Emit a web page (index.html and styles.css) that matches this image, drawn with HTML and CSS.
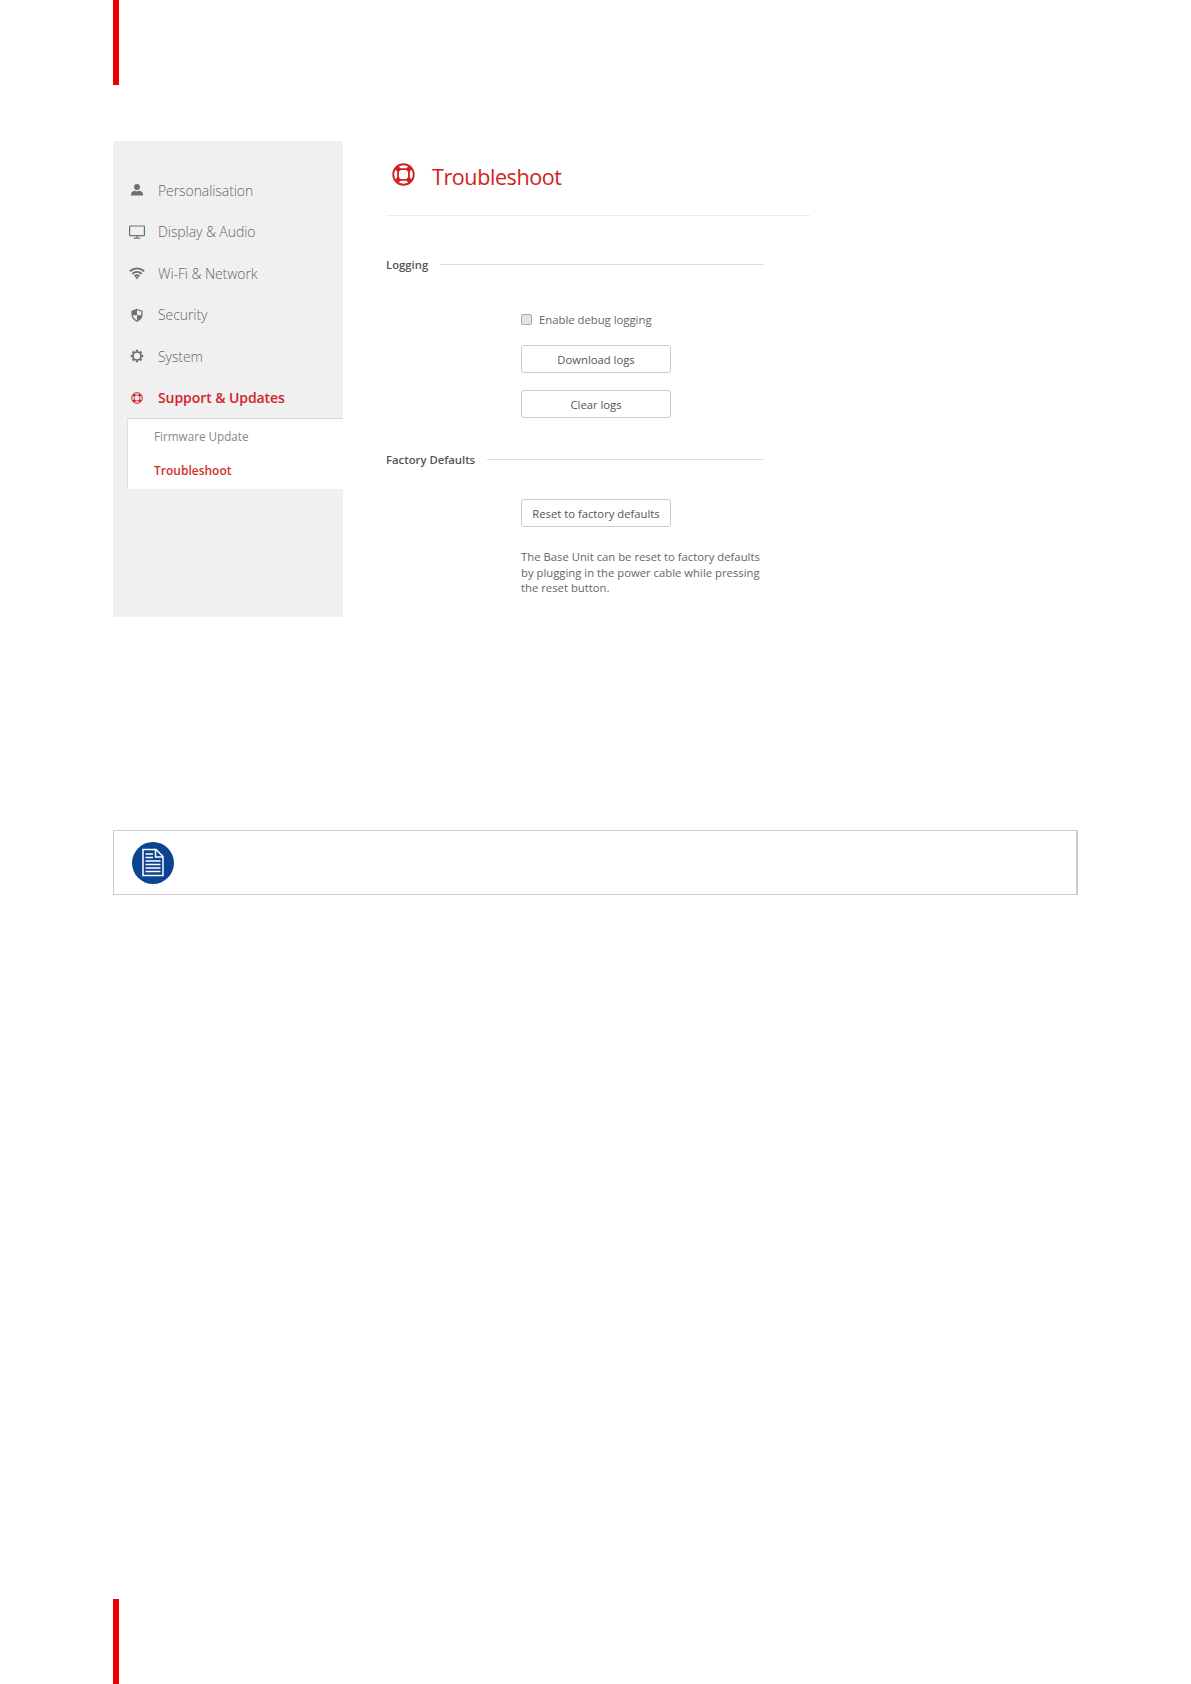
FILE: index.html
```
<!DOCTYPE html>
<html lang="en">
<head>
  <meta charset="UTF-8" />
  <meta name="viewport" content="width=device-width, initial-scale=1" />
  <title>Troubleshoot</title>
  <link rel="stylesheet" href="styles.css">
</head>
<body>

  <svg class="defs" width="0" height="0">
    <symbol id="lifebuoy" viewBox="0 0 24 24">
      <circle cx="12" cy="12" r="10.700" fill="none" stroke="currentColor" stroke-width="1.900" />
      <rect x="6.300" y="6.300" width="11.400" height="11.400" rx="4" fill="none" stroke="currentColor" stroke-width="1.900" />
      <path d="M4.600 4.600l3.300 3.300M19.400 4.600l-3.300 3.300M4.600 19.400l3.300-3.300M19.400 19.400l-3.300-3.300" stroke="currentColor" stroke-width="5" />
    </symbol>
  </svg>

  <div class="page">
    <div class="red-bar"></div>

    <div class="screen">
      <nav class="sidebar">
        <a class="item">
          <svg class="icon" viewBox="0 0 16 16"><circle cx="8" cy="4.900" r="3" /><path d="M2 13.600v-1.400c0-2.200 2-3.200 4-3.400 1.300.7 2.700.7 4 0 2 .2 4 1.200 4 3.400v1.400z" /></svg>
          <span>Personalisation</span>
        </a>
        <a class="item">
          <svg class="icon" viewBox="0 0 16 16"><path d="M1.200 2h13.600q.6 0 .6.600v8.400q0 .6-.6.600H1.200q-.6 0-.6-.6V2.600q0-.6.600-.6zM8 11.600v2.200M4.800 14.100h6.400" fill="none" stroke="currentColor" stroke-width="1.200" /></svg>
          <span>Display &amp; Audio</span>
        </a>
        <a class="item">
          <svg class="icon" viewBox="0 0 16 16"><path d="M.8 6.300c4.200-3.900 10.200-3.900 14.400 0M3.200 8.900c2.800-2.600 6.800-2.600 9.600 0M5.500 11.300c1.500-1.400 3.500-1.400 5 0" fill="none" stroke="currentColor" stroke-width="1.900" /><path d="M6.300 12.500q1.700-1.400 3.400 0L8 14.300z" /></svg>
          <span>Wi-Fi &amp; Network</span>
        </a>
        <a class="item">
          <svg class="icon" viewBox="0 0 16 16"><path d="M8 2.500l4.900 1.600v3.500c0 3.200-1.900 5.200-4.900 6.500-3-1.300-4.900-3.300-4.900-6.500V4.100z" fill="none" stroke="currentColor" stroke-width="1.300" /><path d="M8 8.200h4.900c-.3 2.900-2 4.700-4.900 5.900zM8 2.500v5.700H3.100V4.100z" /></svg>
          <span>Security</span>
        </a>
        <a class="item">
          <svg class="icon" viewBox="0 0 16 16"><circle cx="8" cy="8" r="4" fill="none" stroke="currentColor" stroke-width="1.700" /><path d="M8 1.800v2M8 12.200v2M1.800 8h2M12.200 8h2M3.600 3.600L5 5M11 11l1.400 1.400M3.600 12.400L5 11M11 5l1.400-1.400" stroke="currentColor" stroke-width="2.300" /></svg>
          <span>System</span>
        </a>
        <a class="item active">
          <svg class="icon small"><use href="#lifebuoy" /></svg>
          <span>Support &amp; Updates</span>
        </a>
        <div class="submenu">
          <a>Firmware Update</a>
          <a class="current">Troubleshoot</a>
        </div>
      </nav>

      <main class="content">
        <header class="title">
          <svg class="title-icon"><use href="#lifebuoy" /></svg>
          <h1>Troubleshoot</h1>
        </header>

        <h2 class="section logging"><span>Logging</span></h2>
        <div class="fields">
          <label class="check"><i class="box"></i><span>Enable debug logging</span></label>
          <button class="btn">Download logs</button>
          <button class="btn">Clear logs</button>
        </div>

        <h2 class="section factory"><span>Factory Defaults</span></h2>
        <div class="fields reset">
          <button class="btn">Reset to factory defaults</button>
          <p>The Base Unit can be reset to factory defaults<br>by plugging in the power cable while pressing<br>the reset button.</p>
        </div>
      </main>
    </div>

    <div class="note">
      <svg width="42" height="42" viewBox="0 0 42 42">
        <circle cx="21" cy="21" r="21" fill="#0b4591" />
        <path d="M11 7.500h13l7 7v19H11zM23.500 7.500v7.500h7.500" fill="none" stroke="#fff" stroke-width="1.500" />
        <path d="M13.500 12h7.500M13.500 15.500h7.500M13.500 19h15M13.500 22.500h15M13.500 26h15M13.500 29.500h15" stroke="#fff" stroke-width="1.500" />
      </svg>
    </div>

    <div class="red-bar bottom"></div>
  </div>

</body>
</html>
```
FILE: styles.css
```
* {
  box-sizing: border-box;
}

body {
  margin: 0;
  background: #fff;
  font-family: "Open Sans", sans-serif;
  color: #666;
}

.defs {
  display: block;
}

.page {
  height: 1684px;
  padding: 0 111px 0 113px;
  display: flex;
  flex-direction: column;
  overflow: hidden;
}

.red-bar {
  width: 6px;
  height: 85px;
  background: #ed0000;
}

.red-bar.bottom {
  margin-top: auto;
}

.screen {
  display: flex;
  margin-top: 56px;
  height: 476px;
}

/* sidebar */
.sidebar {
  width: 230px;
  padding: 29px 0 0 14px;
  background: #f0f0f0;
}

.item {
  display: flex;
  align-items: center;
  height: 41.5px;
  font-size: 14px;
  font-weight: 300;
  letter-spacing: -0.08px;
  border-bottom: 1px solid #ebebeb;
}

.icon {
  width: 16px;
  height: 16px;
  margin: 0 13px 0 2px;
  fill: currentColor;
  color: #707070;
}

.icon.small {
  width: 12px;
  height: 12px;
  margin: 0 15px 0 4px;
}

.item.active {
  height: 40.5px;
  color: #d3222a;
  font-weight: 600;
  border-bottom: none;
}

.item.active .icon {
  color: #d3222a;
}

.submenu {
  height: 71px;
  padding: 1px 0 0 26px;
  background: #fff;
  border-top: 1px solid #d8d8d8;
  border-left: 1px solid #dedede;
}

.submenu a {
  display: block;
  height: 34px;
  line-height: 33px;
  font-size: 11.7px;
  color: #888;
}

.submenu .current {
  font-size: 12px;
  color: #d0302c;
  font-weight: 600;
}

/* content */
.content {
  width: 424px;
  margin-left: 43px;
}

.title {
  display: flex;
  height: 75px;
  padding: 22px 0 0 6px;
  border-bottom: 1px solid #ececec;
  color: #cf2222;
}

.title-icon {
  width: 23px;
  height: 23px;
  margin-right: 17px;
}

.title h1 {
  margin: -1px 0 0;
  font-size: 21.5px;
  font-weight: 400;
  line-height: 30px;
  letter-spacing: -0.4px;
}

.section {
  display: flex;
  align-items: center;
  width: 378px;
  height: 20px;
  margin: 0;
  font-size: 11.3px;
  font-weight: 600;
  color: #555;
}

.section::after {
  content: "";
  flex: 1;
  height: 1px;
  margin-left: 12px;
  background: #dcdcdc;
}

.logging {
  margin-top: 38px;
}

.factory {
  margin-top: 14px;
}

.fields {
  display: flex;
  flex-direction: column;
  align-items: flex-start;
  padding: 37px 0 0 135px;
}

.check {
  display: flex;
  align-items: center;
  height: 16px;
  margin-bottom: 18px;
  font-size: 11.3px;
}

.box {
  width: 11px;
  height: 11px;
  margin-right: 7px;
  border: 1px solid #aaa;
  border-radius: 2px;
  background: #e4e4e4;
}

.btn {
  width: 150px;
  height: 28px;
  margin: 0 0 17px;
  padding: 0;
  border: 1px solid #ccc;
  border-radius: 3px;
  background: #fff;
  font: 11.25px "Open Sans", sans-serif;
  color: #555;
}

.reset {
  padding-top: 30px;
}

.reset p {
  margin: 5px 0 0;
  font-size: 11.3px;
  line-height: 15.6px;
  white-space: nowrap;
}

/* note */
.note {
  display: flex;
  align-items: center;
  width: 965px;
  height: 65px;
  margin-top: 213px;
  padding-left: 18px;
  border: 1px solid #ccc;
  border-right-width: 2px;
}
```
